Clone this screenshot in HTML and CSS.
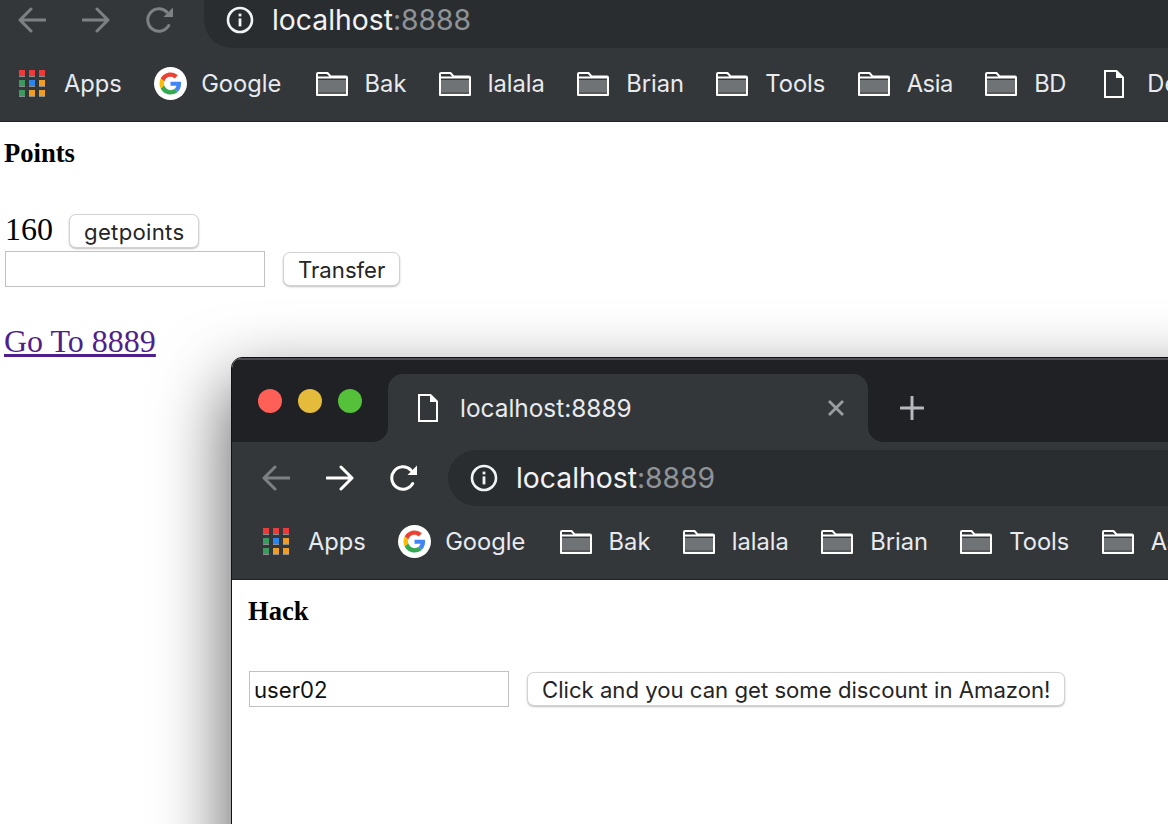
FILE: index.html
```html
<!DOCTYPE html>
<html lang="en">
<head>
<meta charset="utf-8">
<title>Points</title>
<link rel="stylesheet" href="styles.css">
</head>
<body>
<svg class="sprite" aria-hidden="true">
  <symbol id="i-back" viewBox="0 0 28 28"><path d="M27 14H2M13 3 2 14l11 11" fill="none" stroke="currentColor" stroke-width="3" stroke-linecap="round" stroke-linejoin="round"/></symbol>
  <symbol id="i-fwd" viewBox="0 0 28 28"><path d="M1 14h25M15 3l11 11-11 11" fill="none" stroke="currentColor" stroke-width="3" stroke-linecap="round" stroke-linejoin="round"/></symbol>
  <symbol id="i-reload" viewBox="0 0 28 28"><path d="M22.7 19.6A11.2 11.2 0 1 1 20.9 6.1" fill="none" stroke="currentColor" stroke-width="3" stroke-linecap="round"/><path d="M27 1.5V11H17.5z" fill="currentColor"/></symbol>
  <symbol id="i-info" viewBox="0 0 28 28"><circle cx="14" cy="14" r="12" fill="none" stroke="currentColor" stroke-width="2.6"/><rect x="12.6" y="12.4" width="2.8" height="8" fill="currentColor"/><rect x="12.6" y="7.6" width="2.8" height="2.8" fill="currentColor"/></symbol>
  <symbol id="i-folder" viewBox="0 0 32 24"><path d="M2 8h28v14H2z" fill="#6f7376"/><path d="M2 20h28v2H2z" fill="#565a5d"/><path d="M1.2 5.4H31M1 23V2a1 1 0 0 1 1-1h9.5l3 3.4H30a1 1 0 0 1 1 1V23z" fill="none" stroke="#fff" stroke-width="2" stroke-linejoin="round"/></symbol>
  <symbol id="i-doc" viewBox="0 0 20 28"><path d="M1 1h11.5L19 7.5V27H1z" fill="none" stroke="#fff" stroke-width="2"/><path d="M12 1l7 7h-7z" fill="#fff"/></symbol>
  <symbol id="i-apps" viewBox="0 0 28 28">
    <path d="M1 0h6v6H1zM11 0h6v6h-6zM21 0h6v6h-6z" fill="#ef3a3a"/>
    <path d="M1 10h6v6H1zM1 20h6v6H1z" fill="#3c9a5e"/>
    <path d="M11 10h6v6h-6z" fill="#2a86ee"/>
    <path d="M21 10h6v6h-6zM11 20h6v6h-6zM21 20h6v6h-6z" fill="#f09d23"/>
    <path d="M1 6h6v1H1zM11 6h6v1h-6zM21 6h6v1h-6zM1 16h6v1H1zM11 16h6v1h-6zM21 16h6v1h-6zM1 26h6v1H1zM11 26h6v1h-6zM21 26h6v1h-6z" fill="#8b8e90"/>
  </symbol>
  <symbol id="i-google" viewBox="-12 -12 72 72">
    <circle cx="24" cy="24" r="36" fill="#fff"/>
    <path fill="#EA4335" d="M24 9.5c3.54 0 6.71 1.22 9.21 3.6l6.85-6.85C35.9 2.38 30.47 0 24 0 14.62 0 6.51 5.38 2.56 13.22l7.98 6.19C12.43 13.72 17.74 9.5 24 9.5z"/>
    <path fill="#4285F4" d="M46.98 24.55c0-1.57-.15-3.09-.38-4.55H24v9.02h12.94c-.58 2.96-2.26 5.48-4.78 7.18l7.73 6c4.51-4.18 7.09-10.36 7.09-17.65z"/>
    <path fill="#FBBC05" d="M10.53 28.59c-.48-1.45-.76-2.99-.76-4.59s.27-3.14.76-4.59l-7.98-6.19C.92 16.46 0 20.12 0 24c0 3.88.92 7.54 2.56 10.78l7.97-6.19z"/>
    <path fill="#34A853" d="M24 48c6.48 0 11.93-2.13 15.89-5.81l-7.73-6c-2.15 1.45-4.92 2.3-8.16 2.3-6.26 0-11.57-4.22-13.47-9.91l-7.98 6.19C6.51 42.62 14.62 48 24 48z"/>
  </symbol>
  <symbol id="i-close" viewBox="0 0 18 18"><path d="M2 2l14 14M16 2 2 16" fill="none" stroke="currentColor" stroke-width="2.8"/></symbol>
  <symbol id="i-plus" viewBox="0 0 24 24"><path d="M12 1v22M1 12h22" fill="none" stroke="currentColor" stroke-width="3" stroke-linecap="round"/></symbol>
</svg>

<main class="browser">
  <div class="toolbar toolbar-cropped">
    <svg class="nav nav-off"><use href="#i-back"/></svg>
    <svg class="nav nav-off"><use href="#i-fwd"/></svg>
    <svg class="nav nav-off"><use href="#i-reload"/></svg>
    <div class="address address-cropped">
      <svg class="info"><use href="#i-info"/></svg>
      <span class="url">localhost<span class="port">:8888</span></span>
    </div>
  </div>
  <nav class="bookmarks">
    <span class="mark mark-apps"><svg class="ico-apps"><use href="#i-apps"/></svg>Apps</span>
    <span class="mark mark-google"><svg class="ico-google"><use href="#i-google"/></svg>Google</span>
    <span class="mark"><svg class="ico-folder"><use href="#i-folder"/></svg>Bak</span>
    <span class="mark"><svg class="ico-folder"><use href="#i-folder"/></svg>lalala</span>
    <span class="mark"><svg class="ico-folder"><use href="#i-folder"/></svg>Brian</span>
    <span class="mark"><svg class="ico-folder"><use href="#i-folder"/></svg>Tools</span>
    <span class="mark mark-narrow"><svg class="ico-folder"><use href="#i-folder"/></svg>Asia</span>
    <span class="mark mark-narrow"><svg class="ico-folder"><use href="#i-folder"/></svg>BD</span>
    <span class="mark mark-doc"><svg class="ico-doc"><use href="#i-doc"/></svg>Demo</span>
  </nav>
  <section class="page page-points">
    <h1 class="title">Points</h1>
    <div class="points-row">
      <span class="points">160</span>
      <button class="btn btn-spaced" type="button">getpoints</button>
    </div>
    <div class="form-row form-row-tight">
      <input class="field" type="text" value="">
      <button class="btn" type="button">Transfer</button>
    </div>
    <a class="link" href="#">Go To 8889</a>
  </section>
</main>

<div class="window">
  <div class="tabstrip">
    <div class="tabstrip-top"></div>
    <div class="tabstrip-row">
      <div class="lights">
        <span class="light light-red"></span>
        <span class="light light-yellow"></span>
        <span class="light light-green"></span>
      </div>
      <div class="tab">
        <svg class="tab-doc"><use href="#i-doc"/></svg>
        <span class="tab-title">localhost:8889</span>
        <svg class="tab-close"><use href="#i-close"/></svg>
      </div>
      <div class="tabstrip-rest">
        <svg class="tab-plus"><use href="#i-plus"/></svg>
      </div>
    </div>
  </div>
  <div class="toolbar toolbar-full">
    <svg class="nav nav-off"><use href="#i-back"/></svg>
    <svg class="nav"><use href="#i-fwd"/></svg>
    <svg class="nav"><use href="#i-reload"/></svg>
    <div class="address">
      <svg class="info"><use href="#i-info"/></svg>
      <span class="url">localhost<span class="port">:8889</span></span>
    </div>
  </div>
  <nav class="bookmarks bookmarks-window">
    <span class="mark mark-apps"><svg class="ico-apps"><use href="#i-apps"/></svg>Apps</span>
    <span class="mark mark-google"><svg class="ico-google"><use href="#i-google"/></svg>Google</span>
    <span class="mark"><svg class="ico-folder"><use href="#i-folder"/></svg>Bak</span>
    <span class="mark"><svg class="ico-folder"><use href="#i-folder"/></svg>lalala</span>
    <span class="mark"><svg class="ico-folder"><use href="#i-folder"/></svg>Brian</span>
    <span class="mark"><svg class="ico-folder"><use href="#i-folder"/></svg>Tools</span>
    <span class="mark mark-narrow"><svg class="ico-folder"><use href="#i-folder"/></svg>Asia</span>
  </nav>
  <section class="page page-hack">
    <h1 class="title">Hack</h1>
    <div class="form-row form-row-hack">
      <input class="field" type="text" value="user02">
      <button class="btn" type="button">Click and you can get some discount in Amazon!</button>
    </div>
  </section>
</div>
</body>
</html>
```
FILE: styles.css
```css
* { box-sizing: border-box; }
html, body { margin: 0; height: 824px; overflow: hidden; background: #fff; }
body { position: relative; font-family: "Liberation Serif", serif; color: #000; }
.sprite { display: none; }

.browser { display: flex; flex-direction: column; width: 1168px; }

/* toolbar */
.toolbar {
  display: flex; align-items: center; height: 64px; width: 100%;
  background: #33373a; color: #fff; padding-left: 30px; flex: none;
}
.toolbar-cropped { height: 48px; padding-left: 18px; align-items: flex-end; }
.nav { width: 28px; height: 28px; margin-right: 36px; flex: none; color: #fff; }
.toolbar-full .nav { margin-top: 8px; }
.toolbar-cropped .nav { margin-bottom: 14px; }
.nav-off { color: #7d8184; }
.address {
  flex: 1; height: 56px; margin: 8px 0 0 -6px; min-width: 0;
  background: #2a2d30; border-radius: 28px 0 0 28px;
  display: flex; align-items: center; padding-left: 22px; color: #f1f3f4;
}
.address-cropped { height: 48px; margin-top: 0; border-radius: 0 0 0 28px; align-items: flex-start; }
.address-cropped .info { margin-top: 6px; }
.address-cropped .url { margin-top: 4px; }
.info { width: 28px; height: 28px; flex: none; margin-right: 18px; color: #f1f3f4; }
.url { font: 28.3px/32px Inter, "Liberation Sans", sans-serif; color: #f1f3f4; white-space: nowrap; }
.port { color: #8f9398; }

/* bookmarks */
.bookmarks {
  display: flex; align-items: center; height: 74px; padding: 0 0 2px 18px; gap: 32.3px;
  background: #33373a; border-bottom: 1px solid #1f2123; flex: none;
  color: #e8eaed; font: 23.7px/30px Inter, "Liberation Sans", sans-serif; white-space: nowrap;
}
.bookmarks-window { padding-left: 30px; }
.mark { display: flex; align-items: center; gap: 17px; flex: none; }
.mark-apps { gap: 18px; }
.mark-google { margin-right: 2px; }
.mark-narrow { letter-spacing: -.4px; }
.mark-doc { margin-left: 6px; gap: 23px; }
.ico-apps { width: 28px; height: 28px; }
.ico-google { width: 33px; height: 33px; margin-right: -3px; }
.ico-folder { width: 32px; height: 24px; }
.ico-doc { width: 20px; height: 28px; }

/* page */
.page { background: #fff; }
.page-points { padding-left: 4px; }
.page-hack { padding-left: 16px; }
.title { margin: 0; padding-top: 15px; font: 700 26.6px/32px "Liberation Serif", serif; }
.points-row { display: flex; align-items: center; margin-top: 44px; gap: 16px; height: 36px; padding-left: 1px; }
.points { font-size: 32px; line-height: 36px; margin-bottom: 4px; }
.form-row { display: flex; align-items: center; gap: 18px; padding-left: 1px; }
.form-row-tight { margin-top: 2px; }
.form-row-hack { margin-top: 44px; }
.field {
  width: 260px; height: 36px; margin: 0; padding: 1px 4px 0;
  border: 1.5px solid #c1c1c1; background: #fff; color: #111; border-radius: 0;
  font: 22.15px Inter, "Liberation Sans", sans-serif;
}
.btn {
  height: 34px; margin: 0; padding: 1px 14px 0; background: #fff; color: #252525;
  border: 1px solid #d2d2d2; border-radius: 7px; box-shadow: 0 1px 2px rgba(0,0,0,.25);
  font: 22.15px/30px Inter, "Liberation Sans", sans-serif; white-space: nowrap;
}
.btn-spaced { letter-spacing: .3px; }
.link { display: inline-block; margin-top: 36px; font-size: 32px; line-height: 36px; color: #4f1f8c; }

/* overlapping window */
.window {
  position: absolute; left: 231px; top: 357px; width: 1000px; height: 560px;
  border: 1px solid #111; border-radius: 11px 0 0 0; background: #fff;
  box-shadow: 0 30px 70px 4px rgba(0,0,0,.62);
  display: flex; flex-direction: column; overflow: hidden;
}
.tabstrip { flex: none; }
.tabstrip-top { height: 16px; background: #202124; border-top: 2px solid #4b4d50; }
.tabstrip-row { display: flex; height: 68px; background: linear-gradient(#202124 50%, #33373a 50%); }
.lights {
  display: flex; gap: 16px; width: 156px; flex: none; padding: 15px 0 0 26px;
  background: #202124; border-bottom-right-radius: 15px;
}
.light { width: 24px; height: 24px; border-radius: 50%; flex: none; }
.light-red { background: #fe5f57; }
.light-yellow { background: #e4bb3a; }
.light-green { background: #55c03a; }
.tab {
  display: flex; align-items: center; width: 480px; flex: none; padding: 0 23px 0 30px;
  background: #33373a; border-radius: 15px 15px 0 0;
}
.tab-doc { width: 20px; height: 28px; margin-right: 22px; flex: none; }
.tab-title { color: #e8eaed; font: 24.4px/30px Inter, "Liberation Sans", sans-serif; }
.tab-close { width: 18px; height: 18px; margin-left: auto; color: #9a9ea3; }
.tabstrip-rest {
  flex: 1; background: #202124; border-bottom-left-radius: 15px;
  display: flex; align-items: center; padding-left: 32px;
}
.tab-plus { width: 24px; height: 24px; color: #b6b9be; }
```
